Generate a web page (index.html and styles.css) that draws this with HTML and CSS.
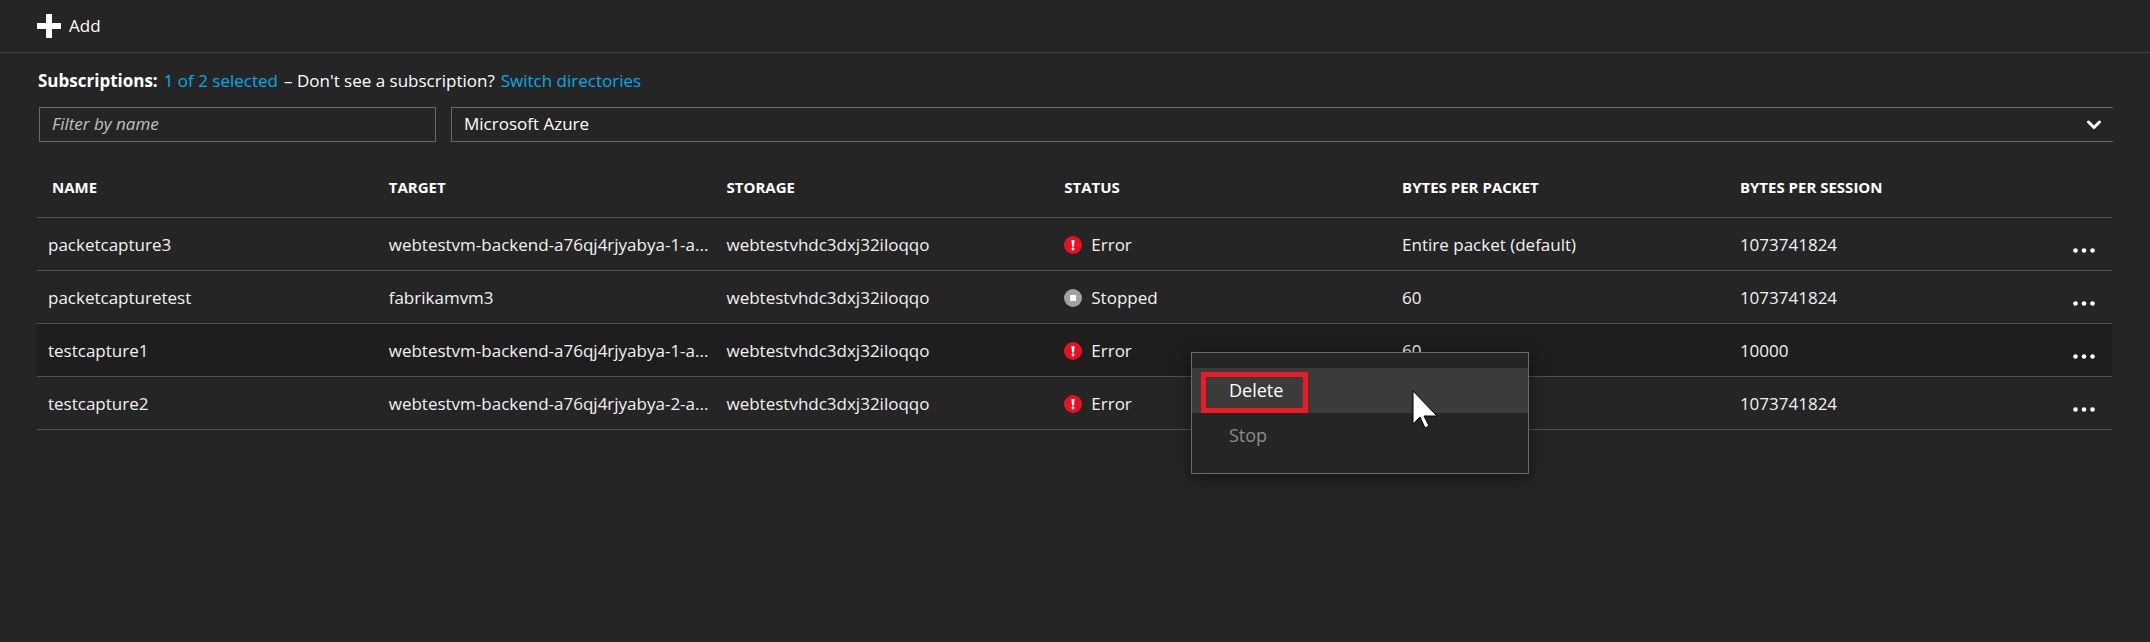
FILE: index.html
```html
<!DOCTYPE html>
<html lang="en">
<head>
<meta charset="utf-8">
<title>Packet capture</title>
<link rel="stylesheet" href="styles.css">
</head>
<body>
<svg class="sprite" aria-hidden="true">
  <symbol id="error" viewBox="0 0 18 18"><circle cx="9" cy="9" r="9" fill="#e81123"/><path d="M7.500 4h3l-.5 6.500h-2z" fill="#fff"/><circle cx="9" cy="13" r="1.400" fill="#fff"/></symbol>
  <symbol id="stopped" viewBox="0 0 18 18"><circle cx="9" cy="9" r="9" fill="#a0a1a2"/><path d="M6 6h6v6H6z" fill="#fff"/></symbol>
  <symbol id="dots" viewBox="0 0 22 5"><circle cx="2.500" cy="2.500" r="2.300"/><circle cx="11" cy="2.500" r="2.300"/><circle cx="19.500" cy="2.500" r="2.300"/></symbol>
</svg>
<header class="toolbar">
  <button class="add" type="button"><svg class="plus" viewBox="0 0 24 24" aria-hidden="true"><path d="M9 0h6v9h9v6h-9v9H9v-9H0V9h9z" fill="#fff"/></svg><span>Add</span></button>
</header>
<main class="content">
  <p class="subs"><strong>Subscriptions:</strong><a href="#">1 of 2 selected</a><span>– Don't see a subscription?</span><a href="#">Switch directories</a></p>
  <div class="filters">
    <input class="filter" type="text" placeholder="Filter by name" aria-label="Filter by name">
    <div class="picker">
      <select class="select" aria-label="Subscription"><option>Microsoft Azure</option></select>
      <svg class="chevron" viewBox="0 0 14 10" aria-hidden="true"><path d="M1.500 2L7 7.500 12.500 2" fill="none" stroke="#fff" stroke-width="3" stroke-linecap="round"/></svg>
    </div>
  </div>
  <table class="grid">
    <thead>
      <tr><th class="name">Name</th><th>Target</th><th>Storage</th><th>Status</th><th>Bytes per packet</th><th class="session">Bytes per session</th><th class="more" aria-label="Actions"></th></tr>
    </thead>
    <tbody>
      <tr><td class="name">packetcapture3</td><td>webtestvm-backend-a76qj4rjyabya-1-a...</td><td>webtestvhdc3dxj32iloqqo</td><td><span class="status"><svg class="icon"><use href="#error"/></svg>Error</span></td><td>Entire packet (default)</td><td>1073741824</td><td class="more"><button type="button" aria-label="More"><svg class="dots"><use href="#dots"/></svg></button></td></tr>
      <tr><td class="name">packetcapturetest</td><td>fabrikamvm3</td><td>webtestvhdc3dxj32iloqqo</td><td><span class="status"><svg class="icon"><use href="#stopped"/></svg>Stopped</span></td><td>60</td><td>1073741824</td><td class="more"><button type="button" aria-label="More"><svg class="dots"><use href="#dots"/></svg></button></td></tr>
      <tr class="active"><td class="name">testcapture1</td><td>webtestvm-backend-a76qj4rjyabya-1-a...</td><td>webtestvhdc3dxj32iloqqo</td><td><span class="status"><svg class="icon"><use href="#error"/></svg>Error</span></td><td>60</td><td>10000</td><td class="more"><button type="button" aria-label="More"><svg class="dots"><use href="#dots"/></svg></button></td></tr>
      <tr><td class="name">testcapture2</td><td>webtestvm-backend-a76qj4rjyabya-2-a...</td><td>webtestvhdc3dxj32iloqqo</td><td><span class="status"><svg class="icon"><use href="#error"/></svg>Error</span></td><td>60</td><td>1073741824</td><td class="more"><button type="button" aria-label="More"><svg class="dots"><use href="#dots"/></svg></button></td></tr>
    </tbody>
  </table>
</main>
<div class="menu" role="menu">
  <button class="item hover" type="button" role="menuitem">Delete</button>
  <button class="item" type="button" role="menuitem" disabled>Stop</button>
  <div class="mark"></div>
  <svg class="cursor" viewBox="0 0 26 38" aria-hidden="true"><path d="M1 1v33l7-7 5 11 4-2-5-10h13z" fill="#fff" stroke="#000" stroke-width="1"/></svg>
</div>
</body>
</html>
```

FILE: styles.css
```css
* { box-sizing: border-box; }
body {
  margin: 0;
  min-height: 100vh;
  background: #252525;
  color: #fff;
  font: 17px/24px "Open Sans", "Noto Sans", sans-serif;
}
button { font: inherit; color: inherit; background: none; border: 0; padding: 0; }
a { color: #00abec; text-decoration: none; }
.sprite { position: absolute; width: 0; height: 0; }
.toolbar { display: flex; padding: 14px 37px; border-bottom: 1px solid #404040; }
.add { display: flex; align-items: center; gap: 8px; }
.plus { width: 24px; height: 24px; }
.content { padding: 16px 38px 0 37px; }
.subs { display: flex; gap: 6px; margin: 0 0 14px 1px; }
.filters { display: flex; gap: 15px; margin: 0 -1px 0 2px; }
.filter, .select {
  height: 35px;
  border: 1px solid #686868;
  border-radius: 0;
  background: #252525;
  color: #fff;
  font: inherit;
  padding: 0 12px 2px;
  outline: 0;
}
.filter { width: 397px; flex: none; }
.filter::placeholder { color: #c0c0c0; font-style: italic; opacity: 1; }
.picker { position: relative; flex: 1; }
.select { display: block; width: 100%; appearance: none; border-right: 0; }
.chevron { position: absolute; right: 12px; top: 13px; width: 14px; height: 10px; pointer-events: none; }
.grid { width: 100%; margin-top: 15px; table-layout: fixed; border-collapse: separate; border-spacing: 0; }
th, td { border-bottom: 1px solid #525252; padding: 0; text-align: left; white-space: nowrap; width: 16.28%; }
th { height: 61px; font-size: 15px; font-weight: 700; text-transform: uppercase; }
td { height: 53px; padding-top: 1px; color: #f2f2f2; }
th.name { width: 16.95%; padding-left: 15px; }
td.name { padding-left: 11px; }
th.session { width: auto; }
.more { width: 60px; text-align: right; padding-right: 17px; }
.more button { display: inline-flex; padding-top: 10px; vertical-align: middle; }
.dots { width: 22px; height: 5px; fill: #fff; }
.active td { background: #1e1e1e; }
.status { display: flex; align-items: center; gap: 9px; }
.icon { width: 18px; height: 18px; }
.menu {
  position: absolute;
  left: 1191px;
  top: 352px;
  width: 338px;
  padding: 15px 0;
  border: 1px solid #686868;
  background: #252525;
  box-shadow: 0 4px 16px rgba(0, 0, 0, .5);
}
.item { display: block; width: 100%; height: 45px; padding: 0 37px 2px; text-align: left; font-size: 18px; }
.item:disabled { color: #8c8c8c; }
.hover { background: #3b3b3b; }
.mark { position: absolute; left: 9px; top: 19px; width: 107px; height: 41px; border: 5px solid #ed1c24; }
.cursor { position: absolute; left: 220px; top: 37px; width: 26px; height: 38px; }
```
